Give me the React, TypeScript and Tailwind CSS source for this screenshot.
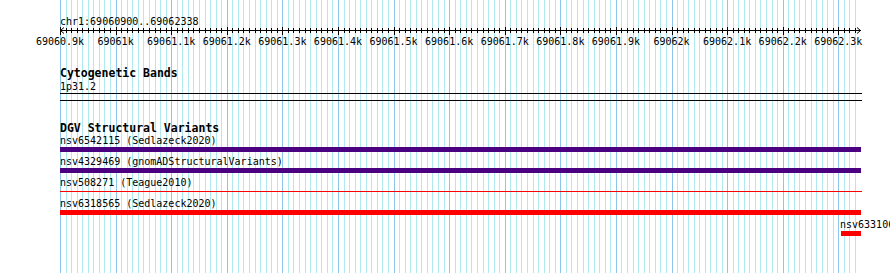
import React from 'react';

const START = 69060900;
const END = 69062338;
const PX = 0.55593; // pixels per base

const pos = (bp: number) => (bp - START) * PX;
const crisp = (v: number) => Math.round(v) + 0.5;
const VIEW_W = Math.round(pos(END)) + 3; // track area width in px

const minorTicks = Array.from({ length: 144 }, (_, i) => i);
const majorTicks = Array.from({ length: 15 }, (_, i) => START + i * 100);

type Feature = {
  label: string;
  color: string;
  thin?: boolean;
  start?: number;
};

const features: Feature[] = [
  { label: 'nsv6542115 (Sedlazeck2020)', color: 'bg-[#4b0082]' },
  { label: 'nsv4329469 (gnomADStructuralVariants)', color: 'bg-[#4b0082]' },
  { label: 'nsv508271 (Teague2010)', color: 'bg-[#ff0000]', thin: true },
  { label: 'nsv6318565 (Sedlazeck2020)', color: 'bg-[#ff0000]' },
  { label: 'nsv6331063 (Sedlazeck2020)', color: 'bg-[#ff0000]', start: 69062305 },
];

function Grid() {
  return (
    <svg className="absolute left-0 top-0" width={890} height={273}>
      {minorTicks.map((i) => (
        <line
          key={i}
          x1={crisp(60 + i * 10 * PX)}
          x2={crisp(60 + i * 10 * PX)}
          y1={0}
          y2={273}
          stroke={i % 10 === 0 ? '#8cc6ec' : '#b0eaf0'}
          strokeWidth={1}
        />
      ))}
    </svg>
  );
}

function Ruler() {
  return (
    <svg className="block" width={890} height={21} style={{ marginLeft: -60 }}>
      <g transform="translate(60 0)">
        <line x1={0} x2={VIEW_W - 1} y1={3.5} y2={3.5} stroke="#000" />
        {/* arrow heads */}
        <polyline points="4,0.5 0.5,3.5 4,6.5" fill="none" stroke="#000" />
        <polyline points={`${VIEW_W - 5},0.5 ${VIEW_W - 1.5},3.5 ${VIEW_W - 5},6.5`} fill="none" stroke="#000" />
        {minorTicks.map((i) => (
          <line
            key={i}
            x1={crisp(i * 10 * PX)}
            x2={crisp(i * 10 * PX)}
            y1={i % 10 === 0 ? 0 : 1}
            y2={i % 10 === 0 ? 8 : 6}
            stroke="#000"
          />
        ))}
        {majorTicks.map((bp) => (
          <text key={bp} x={pos(bp)} y={18} textAnchor="middle" fontSize={10} fill="#000">
            {bp / 1000}k
          </text>
        ))}
      </g>
    </svg>
  );
}

function FeatureRow({ f }: { f: Feature }) {
  const left = f.start ? Math.round(pos(f.start)) : 0;
  const width = VIEW_W - left - (f.thin ? 0 : 1);
  return (
    <div className="h-[21px]">
      <div className="text-[10px] leading-[11px] whitespace-nowrap text-black" style={{ paddingLeft: left ? left - 1 : 0 }}>
        {f.label}
      </div>
      {f.thin ? (
        <div className={`mt-[3px] h-px ${f.color}`} style={{ width }} />
      ) : (
        <div className={`mt-[1px] h-[5px] ${f.color}`} style={{ marginLeft: left, width }} />
      )}
    </div>
  );
}

export default function App() {
  return (
    <div className="relative w-[890px] h-[273px] overflow-hidden bg-white font-['DejaVu_Sans_Mono',monospace] text-black">
      <Grid />
      <div className="relative w-[890px] pl-[60px] pt-[16px]">
        <div className="text-[10px] leading-[11px]">chr1:69060900..69062338</div>
        <Ruler />

        {/* Cytogenetic Bands */}
        <div className="mt-[19px] text-[11.5px] leading-[12px] font-bold">Cytogenetic Bands</div>
        <div className="mt-[2px] text-[10px] leading-[11px]">1p31.2</div>
        <div className="mt-[1px] h-px bg-black" style={{ width: VIEW_W }} />
        <div className="mt-[6px] h-px bg-black" style={{ width: VIEW_W }} />

        {/* DGV Structural Variants */}
        <div className="mt-[21px] text-[11.5px] leading-[12px] font-bold">DGV Structural Variants</div>
        <div className="mt-[1px] overflow-hidden">
          {features.map((f) => (
            <FeatureRow key={f.label} f={f} />
          ))}
        </div>
      </div>
    </div>
  );
}
